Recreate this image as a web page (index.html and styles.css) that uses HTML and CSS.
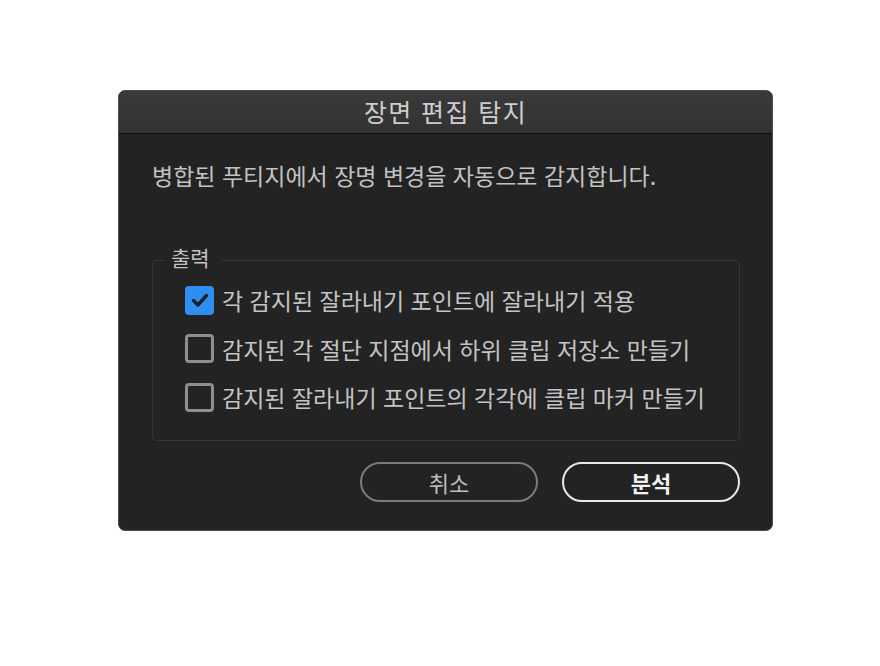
FILE: index.html
```html
<!DOCTYPE html>
<html lang="ko">
<head>
<meta charset="utf-8">
<link rel="stylesheet" href="styles.css">
</head>
<body>
<div class="dialog">
  <div class="titlebar">장면 편집 탐지</div>
  <div class="content">
    <p class="desc">병합된 푸티지에서 장명 변경을 자동으로 감지합니다.</p>
    <div class="group">
      <div class="legend">출력</div>
      <label class="row">
        <span class="box checked">
          <svg viewBox="0 0 28 28" width="28" height="28"><path d="M7.5 14.5 L12 19 L20.5 9.5" fill="none" stroke="#15202b" stroke-width="3.4" stroke-linecap="round" stroke-linejoin="round"/></svg>
        </span>
        <span class="lbl">각 감지된 잘라내기 포인트에 잘라내기 적용</span>
      </label>
      <label class="row">
        <span class="box"></span>
        <span class="lbl">감지된 각 절단 지점에서 하위 클립 저장소 만들기</span>
      </label>
      <label class="row">
        <span class="box"></span>
        <span class="lbl">감지된 잘라내기 포인트의 각각에 클립 마커 만들기</span>
      </label>
    </div>
    <div class="buttons">
      <button class="btn cancel">취소</button>
      <button class="btn primary">분석</button>
    </div>
  </div>
</div>
</body>
</html>
```

FILE: styles.css
```css
html, body {
  margin: 0;
  padding: 0;
  background: #ffffff;
}
body {
  padding: 90px 0 0 118px;
  font-family: "Noto Sans CJK KR", "Noto Sans", sans-serif;
}
.dialog {
  width: 653px;
  height: 439px;
  border: 1px solid #4c4c4c;
  border-radius: 7px;
  background: #232323;
  overflow: hidden;
  display: flex;
  flex-direction: column;
}
.titlebar {
  height: 40px;
  padding-bottom: 2px;
  flex: none;
  border-bottom: 1px solid #0e0e0e;
  background: linear-gradient(#3a3a3a, #323232);
  color: #cdcdcd;
  font-size: 25px;
  line-height: 40px;
  text-align: center;
  letter-spacing: 1.4px;
}
.content {
  padding: 0 32px 0 33px;
  display: flex;
  flex-direction: column;
}
.desc {
  margin: 26px 0 0 0;
  color: #c2c2c2;
  font-size: 23px;
  line-height: 30px;
}
.group {
  margin-top: 70px;
  padding: 0 0 18px 32px;
  border: 1px solid #363636;
  border-radius: 4px;
  display: flex;
  flex-direction: column;
}
.legend {
  align-self: flex-start;
  margin: -16px 0 7px -20px;
  padding: 0 12px 0 6px;
  background: #232323;
  color: #c2c2c2;
  font-size: 21px;
  line-height: 24px;
}
.row {
  display: flex;
  align-items: center;
  gap: 8px;
  height: 48.5px;
}
.box {
  width: 29px;
  height: 29px;
  box-sizing: border-box;
  border: 3px solid #8e8e8e;
  border-radius: 4px;
  flex: none;
  display: flex;
  align-items: center;
  justify-content: center;
}
.box.checked {
  border: none;
  background: #2f8ff0;
}
.box svg {
  display: block;
}
.lbl {
  color: #c4c4c4;
  font-size: 23px;
}
.buttons {
  display: flex;
  justify-content: flex-end;
  gap: 24px;
  margin-top: 21px;
}
.btn {
  width: 178px;
  height: 40px;
  border-radius: 20px;
  background: transparent;
  font-family: "Noto Sans CJK KR", "Noto Sans", sans-serif;
  font-size: 22px;
  padding: 0;
  line-height: 36px;
}
.cancel {
  border: 2px solid #7b7b7b;
  color: #bdbdbd;
}
.primary {
  border: 2px solid #e8e8e8;
  color: #f2f2f2;
  font-weight: bold;
}
```
